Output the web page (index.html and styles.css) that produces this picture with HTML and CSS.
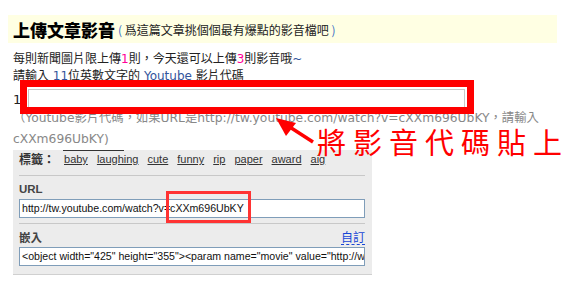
FILE: index.html
```html
<!DOCTYPE html>
<html lang="zh-Hant">
<head>
  <meta charset="UTF-8">
  <title>上傳文章影音</title>
  <link rel="stylesheet" href="styles.css">
</head>
<body>
  <div class="page">
    <div class="head">
      <h2>上傳文章影音</h2>
      <span class="sub"><span class="paren">(</span> 爲這篇文章挑個個最有爆點的影音檔吧 <span class="paren">)</span></span>
    </div>

    <p class="line first">每則新聞圖片限上傳<span class="num">1</span>則，今天還可以上傳<span class="num">3</span>則影音哦<span class="blue">~</span></p>
    <p class="line">請輸入 <span class="blue">11</span>位英數文字的 <span class="blue">Youtube</span> 影片代碼</p>

    <div class="code-row">
      <span>1</span>
      <input type="text" class="code-input">
    </div>

    <p class="hint">（Youtube影片代碼，如果URL是http://tw.youtube.com/watch?v=cXXm696UbKY，請輸入<br>cXXm696UbKY)</p>

    <div class="panel">
      <div class="tags">
        <b>標籤：</b>
        <a href="#">baby</a>
        <a href="#">laughing</a>
        <a href="#">cute</a>
        <a href="#">funny</a>
        <a href="#">rip</a>
        <a href="#">paper</a>
        <a href="#">award</a>
        <a href="#">aig</a>
      </div>
      <div class="field">
        <div class="field-head"><b>URL</b></div>
        <div class="box">http://tw.youtube.com/watch?v=cXXm696UbKY</div>
      </div>
      <div class="field">
        <div class="field-head"><b>嵌入</b><a href="#" class="custom">自訂</a></div>
        <div class="box">&lt;object width="425" height="355"&gt;&lt;param name="movie" value="http://www.youtube.com/v/cXXm696UbKY"&gt;</div>
      </div>
    </div>

    <!-- annotations drawn over the screenshot -->
    <div class="mark mark-input"></div>
    <div class="mark mark-id"></div>
    <svg class="arrow" width="46" height="34" viewBox="0 0 46 34">
      <line x1="41" y1="28" x2="10" y2="8" stroke="#f00" stroke-width="3.5"/>
      <polygon points="4,4 24,9 14,22" fill="#f00"/>
    </svg>
    <div class="note">將影音代碼貼上</div>
  </div>
</body>
</html>
```

FILE: styles.css
```css
* {
  box-sizing: border-box;
}
body {
  margin: 0;
  background: #fff;
  font-family: "Liberation Sans", "Noto Sans CJK TC", sans-serif;
  font-size: 12px;
  color: #222;
}
.page {
  position: relative;
  padding: 15px 13px 0 8px;
}

/* Header */
.head {
  background: #ffffe3;
  height: 28px;
  padding: 0 5px;
  display: flex;
  align-items: center;
  gap: 3px;
}
.head h2 {
  margin: 0;
  font-family: "Noto Sans CJK TC", sans-serif;
  font-size: 17px;
  font-weight: 900;
  color: #000;
}
.sub {
  font-family: "Noto Sans CJK TC", sans-serif;
  font-size: 12px;
  color: #222;
}
.paren {
  color: #3a6fc4;
}

/* Text lines */
.line {
  margin: 0 0 0 5px;
  font-family: "DejaVu Sans", "Noto Sans CJK TC", sans-serif;
  font-size: 12px;
  line-height: 17px;
}
.line.first {
  margin-top: 8px;
}
.num {
  color: #ff0099;
}
.blue {
  color: #33559c;
}

.code-row {
  display: flex;
  align-items: center;
  gap: 7px;
  margin: 4px 0 0 5px;
  font-family: "DejaVu Sans", sans-serif;
  font-size: 13px;
}
.code-input {
  width: 437px;
  height: 20px;
  border: 1px solid #c8c8c8;
  margin: 0;
}

.hint {
  margin: -1px 0 0 5px;
  font-family: "DejaVu Sans", "Noto Sans CJK TC", sans-serif;
  font-size: 12.3px;
  line-height: 21px;
  white-space: nowrap;
  color: #888;
}

/* Panel */
.panel {
  margin: 0 0 0 5px;
  width: 359px;
  background: #ececec;
  border-bottom: 1px solid #d0d0d0;
  padding: 0 7px 0 6px;
  position: relative;
}
.panel::before {
  content: "";
  position: absolute;
  top: 0;
  left: 50px;
  width: 61px;
  height: 1px;
  background: #333;
}
.tags {
  display: flex;
  gap: 9px;
  align-items: center;
  padding-top: 1px;
  line-height: 16px;
  padding-bottom: 8px;
  border-bottom: 1px solid #c8c8c8;
  font-size: 11px;
}
.tags b {
  font-family: "Noto Sans CJK TC", sans-serif;
  font-size: 12px;
  color: #333;
}
.tags a {
  color: #333;
}
.field {
  padding-top: 5px;
  padding-bottom: 5px;
  border-bottom: 1px solid #c8c8c8;
}
.field:last-child {
  border-bottom: none;
  padding-bottom: 8px;
}
.field-head {
  display: flex;
  justify-content: space-between;
  align-items: center;
  height: 16px;
  font-size: 11.5px;
  color: #444;
}
.custom {
  color: #1846d6;
  text-decoration: none;
  border-bottom: 1px dashed #1846d6;
  font-family: "Noto Sans CJK TC", sans-serif;
  font-size: 12px;
  line-height: 15px;
}
.box {
  margin-top: 2px;
  height: 19px;
  background: #fff;
  border: 1px solid #7f9db9;
  padding: 0 2px;
  font-size: 10.6px;
  line-height: 17px;
  white-space: nowrap;
  overflow: hidden;
  color: #111;
}

/* Annotations */
.mark {
  position: absolute;
  border-style: solid;
}
.mark-input {
  left: 20px;
  top: 80px;
  width: 454px;
  height: 34px;
  border-width: 7px;
  border-color: #ff0000;
}
.mark-id {
  left: 166px;
  top: 191px;
  width: 85px;
  height: 32px;
  border-width: 3px;
  border-color: #f33;
}
.arrow {
  position: absolute;
  left: 272px;
  top: 114px;
}
.note {
  position: absolute;
  left: 317px;
  top: 126px;
  font-family: "Noto Sans CJK TC", sans-serif;
  font-size: 29px;
  line-height: 30px;
  letter-spacing: 7px;
  color: #f00;
}
```
